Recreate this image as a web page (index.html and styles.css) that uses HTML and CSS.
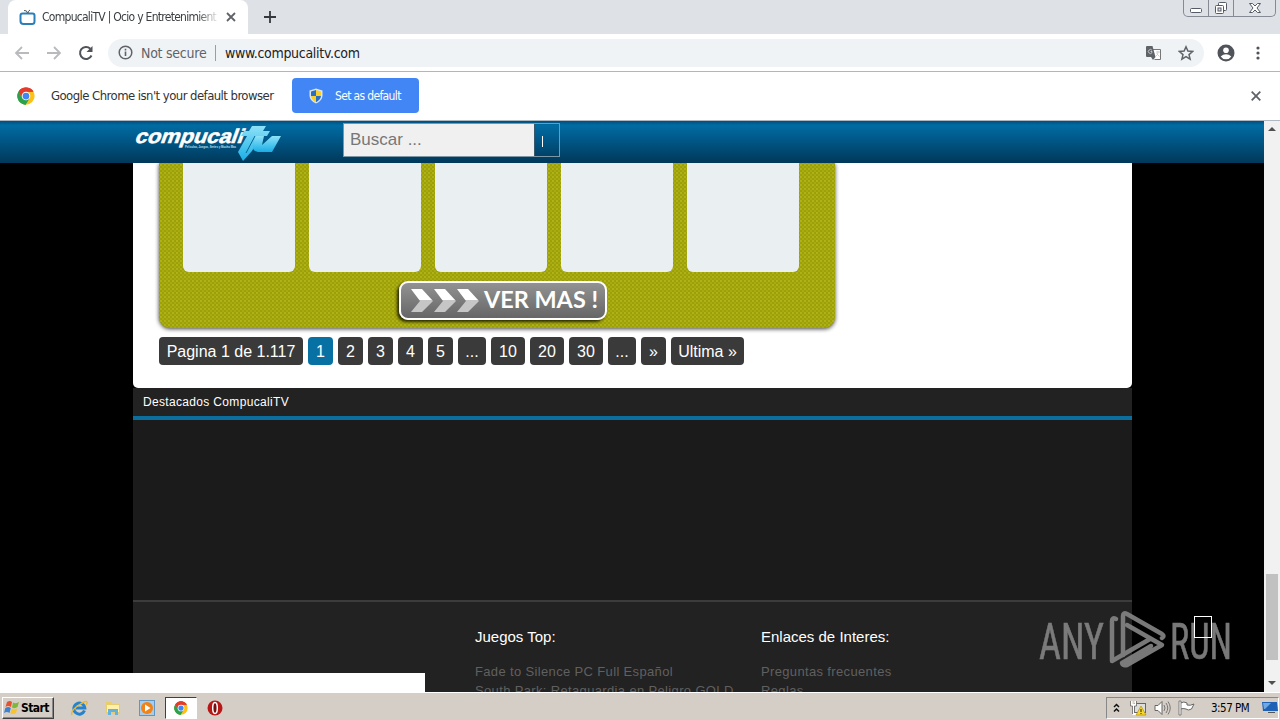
FILE: index.html
```html
<!DOCTYPE html>
<html lang="es">
<head>
<meta charset="utf-8">
<title>CompucaliTV</title>
<link rel="stylesheet" href="styles.css">
</head>
<body>
<svg width="0" height="0" class="defs" aria-hidden="true">
  <defs>
    <symbol id="chrome" viewBox="0 0 48 48">
      <circle cx="24" cy="24" r="23" fill="#fbc116"/>
      <path d="M24 24 4.100 12.500A23 23 0 0 1 43.900 12.500H24Z" fill="#e33b2e"/>
      <path d="M4.100 12.500A23 23 0 0 0 23 47L34 29.700 24 35 14 29.700Z" fill="#2ba24c"/>
      <path d="M4.100 12.500A23 23 0 0 1 43.900 12.500H24L14 29.700Z" fill="#e33b2e"/>
      <path d="M4.100 12.500 14 29.700 24 35 23 47A23 23 0 0 1 4.100 12.500Z" fill="#2ba24c"/>
      <circle cx="24" cy="24" r="11.500" fill="#fff"/><circle cx="24" cy="24" r="9" fill="#4285f4"/>
    </symbol>
    <linearGradient id="cyan" x1="0" y1="0" x2="0" y2="1"><stop offset="0" stop-color="#8ee2f8"/><stop offset="1" stop-color="#18aee6"/></linearGradient>
    <linearGradient id="chev" x1="0" y1="0" x2="0" y2="1"><stop offset=".5" stop-color="#fff"/><stop offset=".5" stop-color="#c6c6c6"/></linearGradient>
  </defs>
</svg>
<div class="screen">
  <div class="tabstrip">
    <div class="tab">
      <svg class="favicon" width="17" height="17" viewBox="0 0 17 17"><path d="M3.500 4.500h10q2 0 2 2v6q0 2.500-2.500 2.500H4.500Q1.500 15 1.500 12V6.500q0-2 2-2Z" fill="none" stroke="#2a7fb8" stroke-width="2"/><path d="M8.500 4Q8 1 5 1.500M9 4q0-2 2-3" fill="none" stroke="#555" stroke-width="1"/></svg>
      <span class="tab-title">CompucaliTV | Ocio y Entretenimient</span>
      <svg width="10" height="10" viewBox="0 0 10 10"><path d="m1 1 8 8M9 1 1 9" stroke="#5f6368" stroke-width="1.800"/></svg>
    </div>
    <svg class="new-tab" width="12" height="12" viewBox="0 0 12 12"><path d="M6 0v12M0 6h12" stroke="#35383c" stroke-width="1.800"/></svg>
    <div class="win-controls">
      <div class="wc wc-min"><svg width="14" height="7" viewBox="0 0 14 7"><rect x="1.500" y="1.500" width="11" height="4" rx="1" fill="#fff" stroke="#555b66"/></svg></div>
      <div class="wc wc-max"><svg width="14" height="14" viewBox="0 0 14 14" fill="#fff" stroke="#555b66"><rect x="4.500" y="1.500" width="8" height="8" rx="1"/><rect x="1.500" y="4.500" width="8" height="8" rx="1"/><rect x="4" y="7" width="3" height="3" fill="#dee1e6"/></svg></div>
      <div class="wc wc-close"><svg width="14" height="12" viewBox="0 0 14 12"><path d="M1.500 1.500h3L7 4l2.500-2.500h3L9 6l3.500 4.500h-3L7 8l-2.500 2.500h-3L5 6Z" fill="#fff" stroke="#555b66"/></svg></div>
    </div>
  </div>

  <div class="toolbar">
    <svg class="nav-icon" width="16" height="16" viewBox="0 0 16 16"><path d="M15 8H2M8 2 2 8l6 6" fill="none" stroke="#b8babd" stroke-width="1.800"/></svg>
    <svg class="nav-icon" width="16" height="16" viewBox="0 0 16 16"><path d="M1 8h13M8 2l6 6-6 6" fill="none" stroke="#b8babd" stroke-width="1.800"/></svg>
    <svg class="nav-icon" width="16" height="16" viewBox="0 0 16 16"><path d="M13.500 10.500A6 6 0 1 1 12.300 3.700" fill="none" stroke="#505357" stroke-width="2"/><path d="M14.500 1v6h-6Z" fill="#505357"/></svg>
    <div class="omnibox">
      <svg width="15" height="15" viewBox="0 0 15 15"><circle cx="7.500" cy="7.500" r="6.300" fill="none" stroke="#5f6368" stroke-width="1.500"/><path d="M7.500 6.500V11M7.500 3.800v1.600" stroke="#5f6368" stroke-width="1.600"/></svg>
      <span class="not-secure">Not secure</span>
      <span class="divider"></span>
      <span class="url">www.compucalitv.com</span>
      <svg class="translate" width="15" height="14" viewBox="0 0 15 14"><path d="M6.500 3.500h8v10h-6" fill="#fff" stroke="#777"/><path d="M0 1q0-1 1-1h5.500l3 11H1q-1 0-1-1Z" fill="#5f6368"/><path d="M6 4.300A2 2 0 1 0 6 6.700V5.500H4.500M10 6h4M12 5v1q0 3-2 4M10.500 7.500l3 3" fill="none" stroke="#ccc" stroke-width=".9"/><path d="M5 11h4.500L7 14Z" fill="#5f6368"/></svg>
      <svg width="16" height="16" viewBox="0 0 16 16"><path d="m8 1.800 1.900 4.300 4.700.4L11 9.600l1.100 4.600L8 11.700l-4.100 2.500L5 9.600 1.400 6.500l4.700-.4Z" fill="none" stroke="#5f6368" stroke-width="1.500"/></svg>
    </div>
    <svg class="avatar" width="18" height="18" viewBox="0 0 18 18"><circle cx="9" cy="9" r="8.500" fill="#50545a"/><circle cx="9" cy="6.300" r="2.800" fill="#fff"/><path d="M3.700 12.500Q6 10.300 9 10.300t5.300 2.200Q12.500 15.300 9 15.300t-5.300-2.800Z" fill="#fff"/></svg>
    <svg class="menu-dots" width="4" height="14" viewBox="0 0 4 14" fill="#50545a"><circle cx="2" cy="2" r="1.600"/><circle cx="2" cy="7" r="1.600"/><circle cx="2" cy="12" r="1.600"/></svg>
  </div>

  <div class="infobar">
    <svg width="18" height="18"><use href="#chrome"/></svg>
    <span class="info-text">Google Chrome isn't your default browser</span>
    <div class="default-btn">
      <svg width="14" height="16" viewBox="0 0 14 16"><path d="M7 .5 13.500 2.500v5q0 5-6.500 8-6.500-3-6.500-8v-5Z" fill="#d9e6f2"/><path d="M7 2v6H2V3.500ZM7 8h5q-.5 4-5 6.200Z" fill="#2c6fc0"/><path d="M7 2l5 1.500V8H7ZM7 8v6.200Q2.500 12 2 8Z" fill="#f8cf2c"/></svg>
      <span>Set as default</span>
    </div>
    <svg class="info-close" width="10" height="10" viewBox="0 0 10 10"><path d="m.7.700 8.600 8.600M9.300.7.700 9.300" stroke="#5f6368" stroke-width="1.800"/></svg>
  </div>

  <div class="viewport">
    <div class="page">
      <header class="site-header">
        <svg class="logo" width="150" height="38" viewBox="0 0 150 38">
          <g transform="translate(1 19) skewX(-20)"><text x="0" y="0" class="logo-name" textLength="108" lengthAdjust="spacingAndGlyphs">compucali</text></g>
          <text x="52" y="24" class="logo-tag" textLength="51" lengthAdjust="spacingAndGlyphs">Peliculas, Juegos, Series y Mucho Mas</text>
          <path d="M119 2h14l-3 5h7l-3 5h-7l-8 15-9 10-5-9 9-16h-6l3-5h5Z" fill="url(#cyan)"/>
          <path d="M122 12h9l-2 9 10-9h9l-9 16h-14q-6-1-5-6Z" fill="url(#cyan)"/>
          <path d="m122 12-9 17" stroke="#086493" stroke-width="1"/>
        </svg>
        <div class="search"><div class="search-input">Buscar ...</div><div class="search-btn"><span class="missing-glyph"></span></div></div>
      </header>
      <main class="container">
        <section class="content">
          <div class="panel">
            <div class="cards"><div class="card"></div><div class="card"></div><div class="card"></div><div class="card"></div><div class="card"></div></div>
            <div class="more">
              <svg width="68" height="24" viewBox="0 0 68 24"><g fill="url(#chev)"><path d="M0 0h11l11 12-11 11H0l9-11Z"/><path d="M23 0h11l11 12-11 11H23l9-11Z"/><path d="M46 0h11l11 12-11 11H46l9-11Z"/></g></svg>
              <svg width="116" height="30" viewBox="0 0 116 30"><text x="1" y="22" class="more-label" textLength="114" lengthAdjust="spacingAndGlyphs">VER MAS !</text></svg>
            </div>
          </div>
          <nav class="pager"><span class="p-info">Pagina 1 de 1.117</span><span class="p1 current">1</span><span class="p1">2</span><span class="p1">3</span><span class="p1">4</span><span class="p1">5</span><span class="p-dots">...</span><span class="p2">10</span><span class="p2">20</span><span class="p2">30</span><span class="p-dots">...</span><span class="p1">»</span><span class="p-last">Ultima »</span></nav>
        </section>
        <section class="featured-title">Destacados CompucaliTV</section>
        <section class="featured"></section>
        <footer class="footer">
          <div class="foot-games"><h3>Juegos Top:</h3><p>Fade to Silence PC Full Español</p><p class="long">South Park: Retaguardia en Peligro GOLD</p></div>
          <div class="foot-links"><h3>Enlaces de Interes:</h3><p>Preguntas frecuentes</p><p>Reglas</p></div>
        </footer>
      </main>
      <div class="status-bubble"></div>
      <svg class="watermark" width="196" height="66" viewBox="0 0 196 66">
        <g class="wm-text"><text x="3" y="51" textLength="65" lengthAdjust="spacingAndGlyphs">ANY</text><text x="134" y="51" textLength="62" lengthAdjust="spacingAndGlyphs">RUN</text></g>
        <g fill="none" stroke="#858585" stroke-width="4.500" stroke-linejoin="round" stroke-linecap="round">
          <path d="M80 11Q76 9 76 13V53L114 31"/>
          <path d="M87 47V8q0-4 4-2l35 20q3 2 0 4"/>
          <path d="M91 17 126 37 91 57q-4 1-5-2l29-17"/>
        </g>
      </svg>
      <span class="to-top"></span>
    </div>
    <div class="scrollbar">
      <svg class="sb-arrow" width="8" height="5" viewBox="0 0 8 5"><path d="m0 5 4-4 4 4Z" fill="#505050"/></svg>
      <div class="sb-track"><div class="sb-thumb"></div></div>
      <svg class="sb-arrow" width="8" height="5" viewBox="0 0 8 5"><path d="m0 0 4 4 4-4Z" fill="#505050"/></svg>
    </div>
  </div>

  <div class="taskbar">
    <div class="start">
      <svg width="16" height="16" viewBox="0 0 16 16"><path d="M3 2q3-2 5 0L7 7Q4 5 1.500 7Z" fill="#e8512d"/><path d="M9 2.500q3 1.500 6-.5l-1.500 5Q11 9 8 7.500Z" fill="#7db83a"/><path d="M1.300 8q3-2 5.500 0l-1.300 5Q3 11 0 13Z" fill="#3d82d0"/><path d="M7.700 8.500q3 1.500 5.700-.3L12 13q-3 2-5.700.3Z" fill="#f8c42e"/></svg>
      <span>Start</span>
    </div>
    <div class="quick">
      <div class="q"><svg width="17" height="16" viewBox="0 0 17 16"><path d="M13.500 10.500A5.500 5.500 0 1 1 13.800 8H5" fill="none" stroke="#2583ce" stroke-width="3"/><path d="M1 15Q-1 11 8 5q7-5 8-3 .5 1-1 3" fill="none" stroke="#e8b836" stroke-width="1.400"/></svg></div>
      <div class="q"><svg width="16" height="16" viewBox="0 0 16 16"><path d="M1 2h5l1 2h8v10H1Z" fill="#e9cc6b"/><path d="M2 5h12v7H2Z" fill="#fff0ac"/><path d="M3 15V9h10v6h-3v-3H6v3Z" fill="#64b2dc"/></svg></div>
      <div class="q"><svg width="16" height="16" viewBox="0 0 16 16"><rect x=".5" y=".5" width="15" height="15" fill="#a9cde9" stroke="#5e96c6"/><circle cx="8" cy="8" r="6" fill="#f08218"/><path d="m6 4.500 5.500 3.500L6 11.500Z" fill="#fff"/></svg></div>
      <div class="q active"><svg width="14" height="14"><use href="#chrome"/></svg></div>
      <div class="q"><svg width="16" height="16" viewBox="0 0 16 16"><circle cx="8" cy="8" r="7.500" fill="#b81717"/><ellipse cx="8" cy="8" rx="2.300" ry="5.500" fill="#751010" stroke="#fff" stroke-width="1.500"/></svg></div>
    </div>
    <div class="tray">
      <svg class="t-chev" width="7" height="10" viewBox="0 0 7 10"><path d="m1 4 2.500-2.500L6 4M1 8.500 3.500 6 6 8.500" fill="none" stroke="#111" stroke-width="1.500"/></svg>
      <svg class="t-net" width="17" height="16" viewBox="0 0 17 16"><rect x="4.500" y="3.500" width="11" height="9" fill="#ddd" stroke="#666"/><path d="M1.500 1v4h4V1M3.500 5v9h4" fill="none" stroke="#fff" stroke-width="2"/><path d="M.5 1v5h2v8M6.500 1v5h-2v7" fill="none" stroke="#555" stroke-width=".7"/><path d="m11 6 5 9H6Z" fill="#f5d82b" stroke="#a68508" stroke-width=".6"/><path d="M11 9v3M11 13v1" stroke="#222"/></svg>
      <svg class="t-vol" width="17" height="16" viewBox="0 0 17 16"><path d="M1 5.500h3l4-4v13l-4-4H1Z" fill="#fff" stroke="#666"/><path d="M10 5q2 3 0 6M12 3q3.500 5 0 10M14 1.500q4.500 6.500 0 13" fill="none" stroke="#777"/></svg>
      <svg class="t-flag" width="17" height="16" viewBox="0 0 17 16"><path d="M2.500 3Q6 1 9 3v2q3 1 7-1l-2.500 5Q10 11 8 9q-3-1-5.500 0" fill="#fff" stroke="#666"/><path d="M1 1h2v14H1Z" fill="#fff" stroke="#666" stroke-width=".8"/></svg>
      <span class="clock">3:57 PM</span>
      <svg class="t-desk" width="16" height="13" viewBox="0 0 16 13"><path d="M0 1h15l1 9H1Z" fill="#1e61b5"/><path d="M1 2h8L3 8H2Z" fill="#6fa9e4"/><path d="M6 11h7v1H6Z" fill="#555"/></svg>
    </div>
  </div>
</div>
</body>
</html>
```
FILE: styles.css
```css
* { box-sizing: border-box; }
body { margin: 0; font-family: "Liberation Sans", Arial, sans-serif; }
svg { display: block; flex: none; }
.defs { position: absolute; }
.screen { width: 1280px; height: 720px; overflow: hidden; display: flex; flex-direction: column; background: #fff; white-space: nowrap; }

.tabstrip { height: 34px; flex: none; background: #dee1e6; display: flex; align-items: flex-start; }
.tab { width: 240px; height: 34px; margin-left: 8px; padding-left: 12px; background: #fff; border-radius: 8px 8px 0 0; display: flex; align-items: center; }
.tab-title { width: 176px; margin: 0 8px 0 6px; overflow: hidden; font: 12px "DejaVu Sans Condensed", "DejaVu Sans", sans-serif; font-stretch: condensed; letter-spacing: -.72px; color: #3c4043; -webkit-mask-image: linear-gradient(90deg, #000 155px, transparent 178px); }
.favicon { margin-left: -1px; }
.new-tab { margin: 11px 0 0 16px; }
.win-controls { margin: 0 4px 0 auto; width: 93px; height: 17px; border: 1px solid #858a94; border-top: 0; border-radius: 0 0 5px 5px; display: flex; }
.wc { display: flex; align-items: center; justify-content: center; }
.wc-min { width: 25px; padding-top: 5px; border-right: 1px solid #858a94; }
.wc-max { width: 25px; border-right: 1px solid #858a94; }
.wc-close { flex: 1; padding-bottom: 1px; }

.toolbar { height: 38px; flex: none; border-bottom: 1px solid #b3b5b8; display: flex; align-items: center; padding-left: 14px; }
.nav-icon { margin-right: 16px; }
.omnibox { width: 1096px; height: 28px; margin-left: -2px; padding: 0 10px; border-radius: 14px; background: #f0f3f6; display: flex; align-items: center; }
.not-secure, .url { font: 14px "DejaVu Sans Condensed", "DejaVu Sans", sans-serif; font-stretch: condensed; }
.not-secure { width: 68px; margin-left: 8px; color: #5f6368; letter-spacing: -.25px; }
.divider { width: 1px; height: 16px; margin: 0 9px 0 6px; background: #9a9da1; }
.url { color: #202124; letter-spacing: -.3px; }
.translate { margin: 0 17px 0 auto; }
.avatar { margin-left: 13px; }
.menu-dots { margin-left: 21px; }

.infobar { height: 49px; flex: none; padding: 0 19px 1px 17px; display: flex; align-items: center; font: 13px "DejaVu Sans Condensed", "DejaVu Sans", sans-serif; font-stretch: condensed; color: #333; border-bottom: 1px solid #aeb9c0; }
.info-text { width: 228px; margin: 0 13px 0 16px; letter-spacing: -.55px; }
.default-btn { width: 127px; height: 35px; border-radius: 4px; background: #4285f4; color: #fff; display: flex; align-items: center; padding-left: 17px; gap: 12px; font-size: 12px; letter-spacing: -.65px; }
.info-close { margin-left: auto; }

.viewport { height: 571px; flex: none; display: flex; }
.page { position: relative; width: 1264px; height: 571px; overflow: hidden; background: #000; }
.site-header { height: 42px; padding-left: 133px; display: flex; align-items: flex-start; background: linear-gradient(#004f7c 0, #006ca4 10%, #00385a 100%); }
.logo { margin-top: 3px; }
.logo-name { font: bold 20px "Liberation Sans", sans-serif; fill: #fff; stroke: #fff; stroke-width: .5; }
.logo-tag { font: bold 4px "Liberation Sans", sans-serif; fill: #bde0ef; }
.search { width: 217px; height: 34px; margin: 2px 0 0 60px; border: 1px solid #7c97a3; display: flex; }
.search-input { width: 190px; background: #f0f0f0; color: #777; font-size: 17px; line-height: 32px; padding-left: 6px; }
.search-btn { flex: 1; border-left: 1px solid #37596b; display: flex; align-items: center; padding: 2px 0 0 7px; }
.missing-glyph { width: 1px; height: 11px; background: #fff; }

.container { width: 999px; margin-left: 133px; }
.content { height: 225px; padding-left: 26px; background: #fff; border-radius: 0 0 5px 5px; overflow: hidden; }
.panel { width: 676px; height: 165px; border-radius: 0 0 11px 11px; box-shadow: 0 1px 4px #444; background-color: #999b06; background-image: radial-gradient(circle, #b0b316 25%, transparent 60%), radial-gradient(circle, #a9ab12 25%, transparent 60%); background-size: 4px 4px; background-position: 0 0, 2px 2px; }
.cards { display: flex; gap: 14px; padding-left: 24px; }
.card { width: 112px; height: 109px; border-radius: 0 0 6px 6px; background: #eaf0f2; }
.more { width: 208px; height: 39px; margin: 9px 0 0 240px; border: 2px solid #fff; border-radius: 9px; background: linear-gradient(#929292, #666); box-shadow: -2px 2px 3px #2c2c00; display: flex; align-items: center; gap: 4px; padding-left: 10px; }
.more-label { font: bold 23px Lato, sans-serif; fill: #fff; }
.pager { margin-top: 9px; display: flex; gap: 5px; }
.pager span { height: 28px; border-radius: 4px; background: #3a3a3a; color: #fff; font-size: 16px; line-height: 29px; text-align: center; }
.pager .p-info { width: 144px; }
.pager .p1 { width: 25px; }
.pager .p2 { width: 34px; }
.pager .p-dots { width: 28px; }
.pager .p-last { width: 73px; }
.pager .current { background: #0871a3; }
.featured-title { height: 32px; padding-left: 10px; border-bottom: 4px solid #0c6e9d; background: #222; color: #fff; font-size: 12px; line-height: 28px; letter-spacing: .33px; }
.featured { height: 182px; background: #1b1b1b; border-bottom: 2px solid #3c3c3c; }
.footer { height: 90px; overflow: hidden; background: #222; padding: 26px 0 0 342px; display: flex; }
.foot-games { width: 286px; }
.footer h3 { margin: 0 0 16px; color: #fff; font-weight: normal; font-size: 15px; line-height: 18px; letter-spacing: 0; }
.footer p { margin: 0; color: #606060; font-size: 13px; line-height: 19px; letter-spacing: .35px; }
.status-bubble { position: absolute; left: 0; bottom: 0; width: 425px; height: 19px; background: #fff; }
.watermark { position: absolute; left: 1036px; top: 487px; opacity: .9; }
.wm-text { font: 50px "Roboto Condensed", Roboto, sans-serif; fill: #858585; stroke: #858585; stroke-width: .6; }
.to-top { position: absolute; left: 1194px; top: 495px; width: 18px; height: 22px; border: 1px solid #fff; }
.scrollbar { width: 16px; background: #f1f1f1; display: flex; flex-direction: column; align-items: center; padding: 5px 0 6px; }
.sb-track { width: 12px; flex: 1; display: flex; align-items: flex-end; padding-bottom: 21px; }
.sb-thumb { width: 12px; height: 86px; background: #c1c1c1; }

.taskbar { height: 28px; flex: none; background: #d5cec6; border-top: 1px solid #fff; display: flex; align-items: center; padding: 2px 1px 0 2px; }
.start { width: 52px; height: 22px; display: flex; align-items: center; gap: 1px; padding-left: 1px; border: 1px solid; border-color: #fff #404040 #404040 #fff; box-shadow: inset -1px -1px #888; font: bold 12px "DejaVu Sans Condensed", "DejaVu Sans", sans-serif; font-stretch: condensed; letter-spacing: -.6px; }
.quick { display: flex; margin-left: 9px; gap: 2px; }
.q { width: 32px; height: 22px; display: flex; align-items: center; justify-content: center; }
.q.active { background: #fff; border: 1px solid; border-color: #404040 #fff #fff #404040; }
.tray { width: 173px; height: 22px; margin-left: auto; border: 1px solid; border-color: #888 #fff #fff #888; display: flex; align-items: center; padding-left: 6px; }
.t-net { margin-left: 10px; }
.t-vol { margin-left: 7px; }
.t-flag { margin-left: 7px; }
.clock { width: 40px; margin-left: 16px; font: 11.5px "DejaVu Sans Condensed", "DejaVu Sans", sans-serif; font-stretch: condensed; letter-spacing: -.5px; }
.t-desk { margin-left: 11px; }
```
